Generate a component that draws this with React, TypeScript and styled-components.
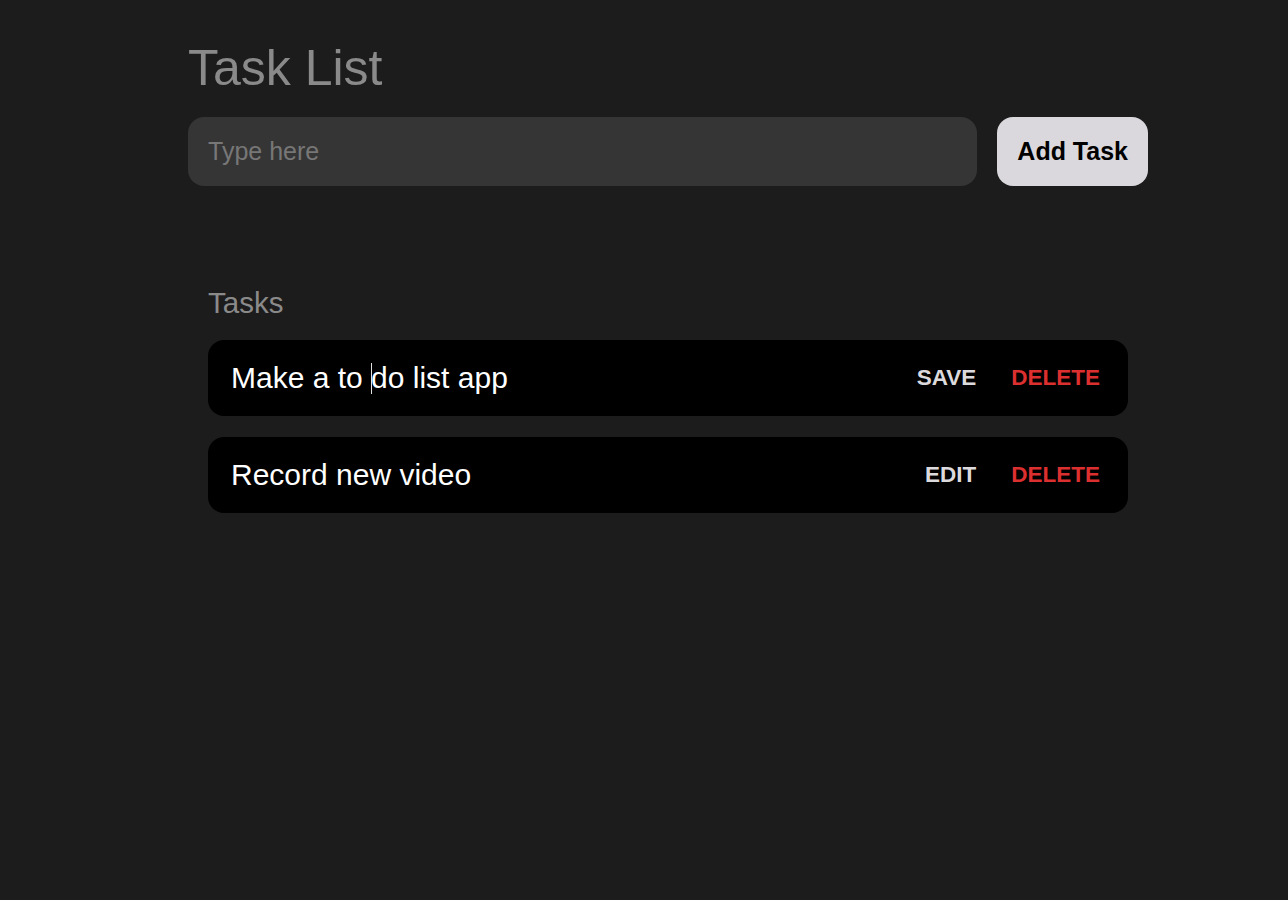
import React, { useState } from "react";
import styled, { createGlobalStyle } from "styled-components";

const Global = createGlobalStyle`
  html, body {
    margin: 0;
    padding: 0;
    background: #1c1c1c;
    font-family: "Liberation Sans", Arial, sans-serif;
  }
`;

const Page = styled.div`
  min-height: 900px;
  background: #1c1c1c;
  padding-top: 40px;
  box-sizing: border-box;
`;

const Container = styled.div`
  width: 960px;
  margin-left: 188px;
`;

const Title = styled.h1`
  margin: 0;
  font-size: 50px;
  line-height: 56px;
  font-weight: 400;
  color: #8a8a8a;
`;

const InputRow = styled.div`
  display: flex;
  gap: 20px;
  margin-top: 21px;
`;

const TextInput = styled.input`
  flex: 1;
  height: 69px;
  box-sizing: border-box;
  border: none;
  outline: none;
  border-radius: 16px;
  background: #353535;
  padding: 0 20px;
  font-family: "Liberation Sans", Arial, sans-serif;
  font-size: 25px;
  color: #ddd;
  &::placeholder {
    color: #777777;
  }
`;

const AddButton = styled.button`
  height: 69px;
  padding: 0 20px;
  border: none;
  border-radius: 16px;
  background: #dad8dc;
  color: #000;
  font-family: "Liberation Sans", Arial, sans-serif;
  font-size: 25px;
  font-weight: 700;
  cursor: pointer;
`;

const Section = styled.section`
  margin-top: 101px;
  padding: 0 20px;
`;

const SectionTitle = styled.h2`
  margin: 0;
  font-size: 29.5px;
  line-height: 32px;
  font-weight: 400;
  color: #8a8a8a;
`;

const List = styled.ul`
  list-style: none;
  margin: 21px 0 0;
  padding: 0;
  display: flex;
  flex-direction: column;
  gap: 21px;
`;

const Row = styled.li`
  height: 76px;
  box-sizing: border-box;
  background: #000;
  border-radius: 16px;
  display: flex;
  align-items: center;
  padding: 0 28px 0 23px;
`;

const TaskText = styled.span`
  flex: 1;
  font-size: 30px;
  color: #fff;
  white-space: pre;
`;

const Caret = styled.span`
  display: inline-block;
  width: 1px;
  height: 31px;
  background: #e0e0e0;
  vertical-align: -6px;
  margin-right: -1px;
`;

const Actions = styled.div`
  display: flex;
  gap: 35px;
`;

const ActionButton = styled.button<{ $danger?: boolean }>`
  border: none;
  background: none;
  padding: 0;
  font-family: "Liberation Sans", Arial, sans-serif;
  font-size: 22.5px;
  font-weight: 700;
  color: ${(p) => (p.$danger ? "#dc2f2f" : "#dcdadd")};
  cursor: pointer;
`;

type Task = { id: number; text: string; editing: boolean };

export default function App() {
  const [tasks] = useState<Task[]>([
    { id: 1, text: "Make a to do list app", editing: true },
    { id: 2, text: "Record new video", editing: false },
  ]);

  return (
    <Page>
      <Global />
      <Container>
        <Title>Task List</Title>
        <InputRow>
          <TextInput placeholder="Type here" />
          <AddButton>Add Task</AddButton>
        </InputRow>
        <Section>
          <SectionTitle>Tasks</SectionTitle>
          <List>
            {tasks.map((t) => (
              <Row key={t.id}>
                {t.editing ? (
                  <TaskText>
                    {"Make a to "}
                    <Caret />
                    {"do list app"}
                  </TaskText>
                ) : (
                  <TaskText>{t.text}</TaskText>
                )}
                <Actions>
                  <ActionButton>{t.editing ? "SAVE" : "EDIT"}</ActionButton>
                  <ActionButton $danger>DELETE</ActionButton>
                </Actions>
              </Row>
            ))}
          </List>
        </Section>
      </Container>
    </Page>
  );
}
